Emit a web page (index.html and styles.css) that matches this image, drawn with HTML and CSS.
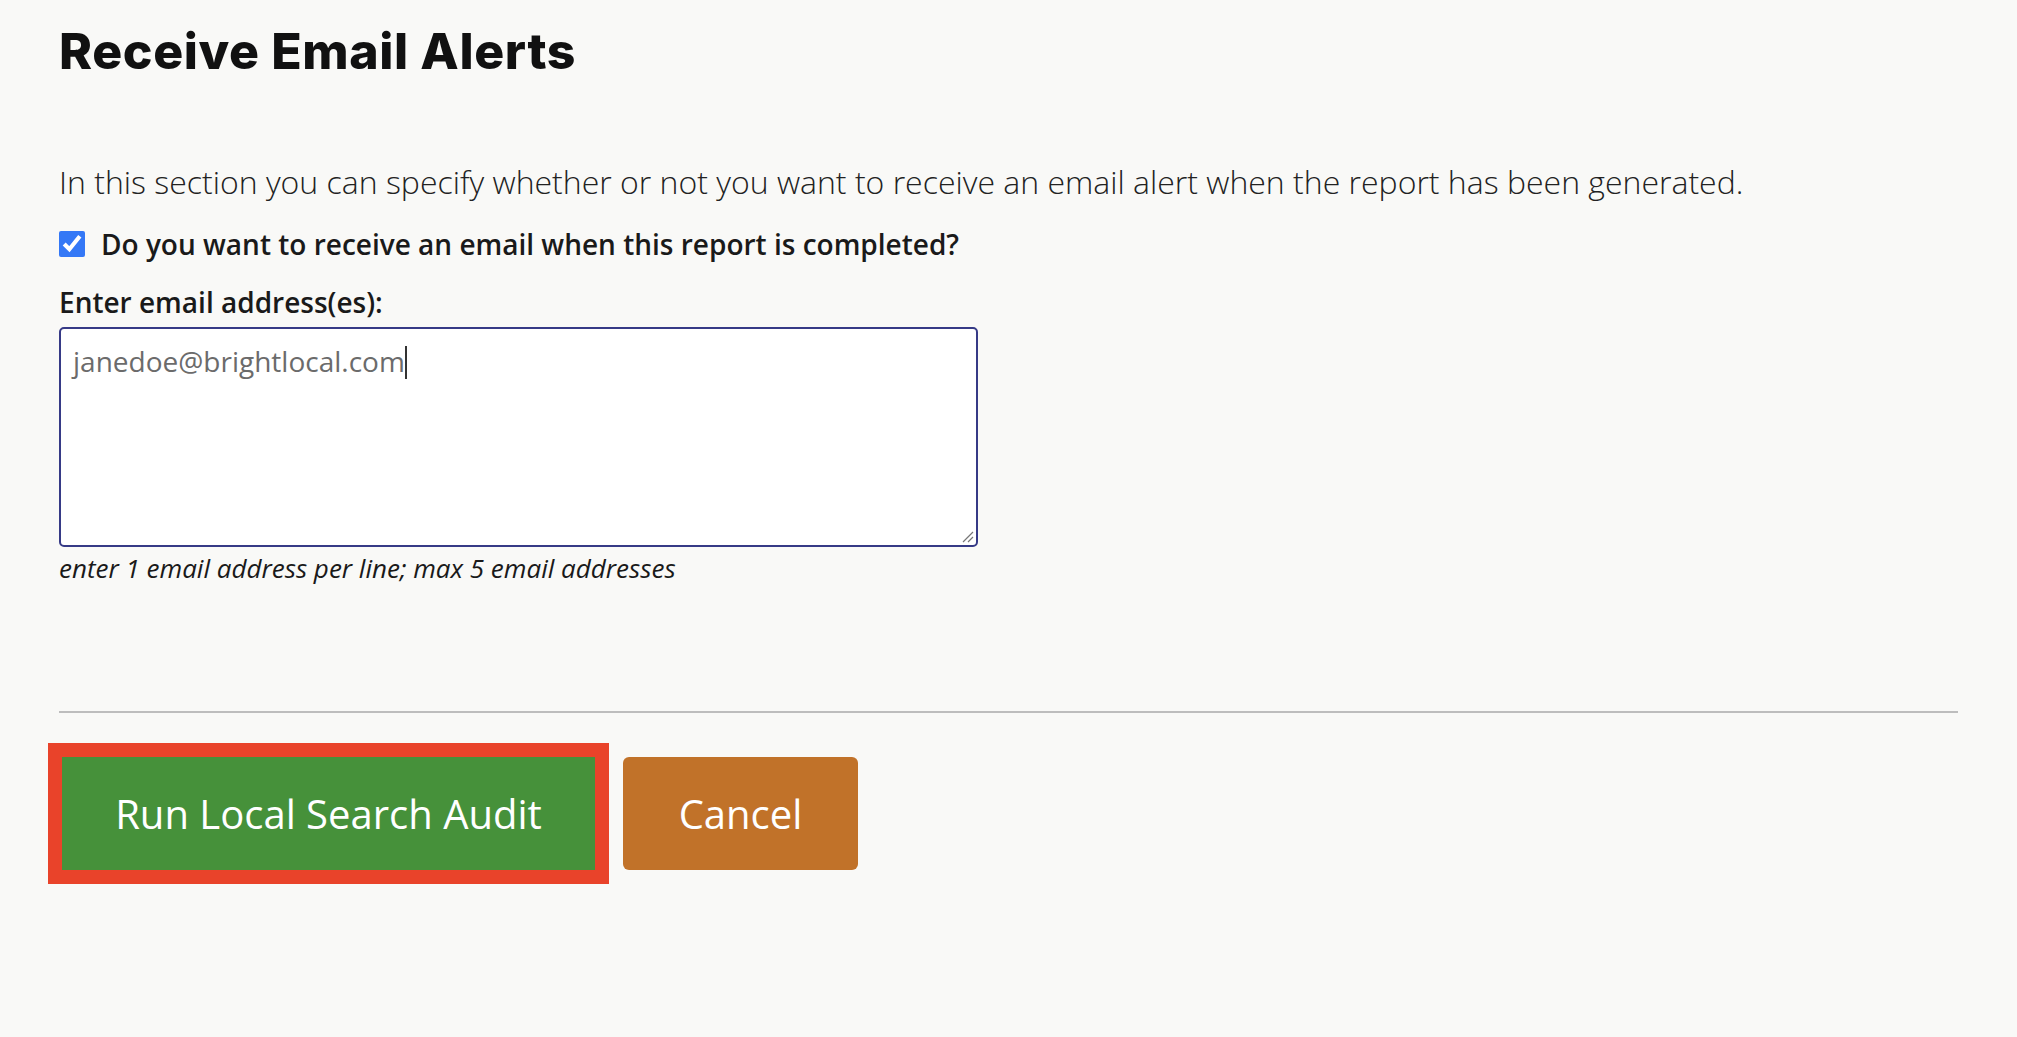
FILE: index.html
```html
<!DOCTYPE html>
<html lang="en">
<head>
  <meta charset="UTF-8">
  <meta name="viewport" content="width=device-width, initial-scale=1.0">
  <title>Receive Email Alerts</title>
  <link rel="stylesheet" href="styles.css">
</head>
<body>
  <div class="alerts-section">
    <h2 class="section-title">Receive Email Alerts</h2>

    <p class="section-intro">In this section you can specify whether or not you want to receive an email alert when the report has been generated.</p>

    <label class="check-row">
      <input type="checkbox" checked>
      <span>Do you want to receive an email when this report is completed?</span>
    </label>

    <label class="field-label" for="emails">Enter email address(es):</label>
    <div class="textarea-box">
      <span class="typed">janedoe@brightlocal.com</span><span class="caret"></span>
      <svg class="grip" width="14" height="14" viewBox="0 0 14 14">
        <path d="M13 3 L3 13 M13 8 L8 13" stroke="#777" stroke-width="1.2" fill="none"/>
      </svg>
    </div>
    <p class="field-help">enter 1 email address per line; max 5 email addresses</p>
  </div>

  <hr class="divider">

  <div class="actions">
    <button class="btn btn-run">Run Local Search Audit</button>
    <button class="btn btn-cancel">Cancel</button>
  </div>
</body>
</html>
```

FILE: styles.css
```css
body {
  margin: 0;
  padding: 0 59px 160px;
  background-color: #f9f9f7;
  color: #1a1a1a;
  font-family: "Open Sans", Arial, sans-serif;
}

.section-title {
  font-family: Inter, "Open Sans", sans-serif;
  font-weight: 800;
  font-size: 50px;
  line-height: 60px;
  margin: 21px 0 0;
  color: #111;
  letter-spacing: 0.6px;
}

.section-intro {
  font-weight: 300;
  font-size: 32px;
  line-height: 44px;
  margin: 79px 0 0;
  color: #222;
}

.check-row {
  display: flex;
  align-items: center;
  gap: 16px;
  margin-top: 21px;
  font-weight: 600;
  font-size: 28px;
  line-height: 38px;
}

.check-row input {
  width: 26px;
  height: 26px;
  margin: 0;
  accent-color: #3478f6;
}

.field-label {
  display: block;
  margin-top: 20px;
  font-weight: 600;
  font-size: 28px;
  line-height: 38px;
}

.textarea-box {
  position: relative;
  box-sizing: border-box;
  width: 919px;
  height: 220px;
  margin-top: 6px;
  padding: 13px 12px;
  background: #fff;
  border: 2px solid #363a86;
  border-radius: 5px;
  font-size: 28px;
  line-height: 38px;
  color: #6b6b6b;
}

.caret {
  display: inline-block;
  width: 2px;
  height: 33px;
  background: #333;
  vertical-align: -7px;
}

.grip {
  position: absolute;
  right: 2px;
  bottom: 2px;
}

.field-help {
  font-style: italic;
  font-size: 26px;
  line-height: 36px;
  margin: 3px 0 0;
}

.divider {
  border: none;
  border-top: 2px solid #bdbdbd;
  margin: 125px 0 0;
}

.actions {
  display: flex;
  gap: 28px;
  margin-top: 44px;
  padding-left: 3px;
}

.btn {
  height: 113px;
  border: none;
  border-radius: 6px;
  color: #fff;
  font-family: "Open Sans", Arial, sans-serif;
  font-size: 40px;
  cursor: pointer;
}

.btn-run {
  width: 533px;
  background-color: #46913a;
  border-radius: 0;
  box-shadow: 0 0 0 14px #e9432a;
}

.btn-cancel {
  width: 235px;
  background-color: #c17229;
}
```
